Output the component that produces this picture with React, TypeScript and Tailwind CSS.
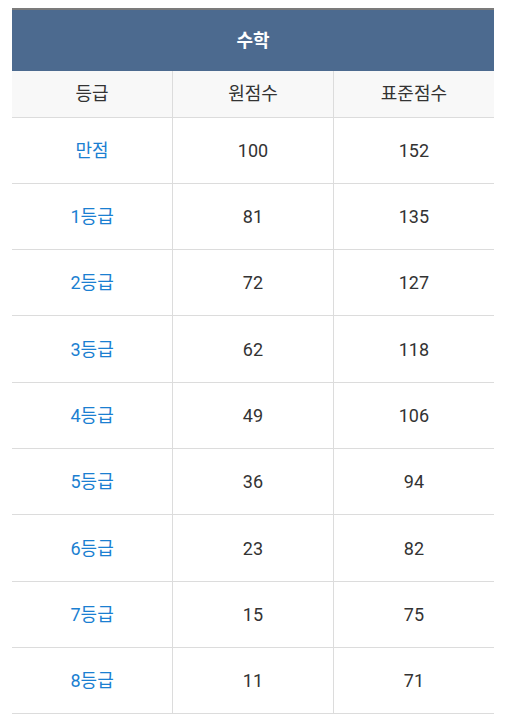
import React from "react";

const rows: [string, string, string][] = [
  ["만점", "100", "152"],
  ["1등급", "81", "135"],
  ["2등급", "72", "127"],
  ["3등급", "62", "118"],
  ["4등급", "49", "106"],
  ["5등급", "36", "94"],
  ["6등급", "23", "82"],
  ["7등급", "15", "75"],
  ["8등급", "11", "71"],
];

export default function App() {
  return (
    <div
      className="bg-white min-h-[721px] pt-2 px-3"
      style={{ fontFamily: "Roboto, 'Noto Sans CJK KR', sans-serif" }}
    >
      <table className="w-[482px] border-collapse table-fixed text-[18px] text-[#333]">
        <thead>
          <tr>
            <th
              colSpan={3}
              className="h-[62px] p-0 bg-[#4c6a8f] border-t-2 border-[#7b7b7b] text-white font-bold text-[18px]"
            >
              수학
            </th>
          </tr>
          <tr className="bg-[#f8f8f8]">
            <th className="h-[46px] p-0 font-normal border-b border-r border-[#dcdcdc] w-[161px]">등급</th>
            <th className="h-[46px] p-0 font-normal border-b border-r border-[#dcdcdc] w-[161px]">원점수</th>
            <th className="h-[46px] p-0 font-normal border-b border-[#dcdcdc]">표준점수</th>
          </tr>
        </thead>
        <tbody>
          {rows.map(([a, b, c]) => (
            <tr key={a} className="h-[66.33px]">
              <td className="p-0 text-center text-[#1b7fd1] border-b border-r border-[#dcdcdc]">{a}</td>
              <td className="p-0 text-center border-b border-r border-[#dcdcdc]">{b}</td>
              <td className="p-0 text-center border-b border-[#dcdcdc]">{c}</td>
            </tr>
          ))}
        </tbody>
      </table>
    </div>
  );
}
